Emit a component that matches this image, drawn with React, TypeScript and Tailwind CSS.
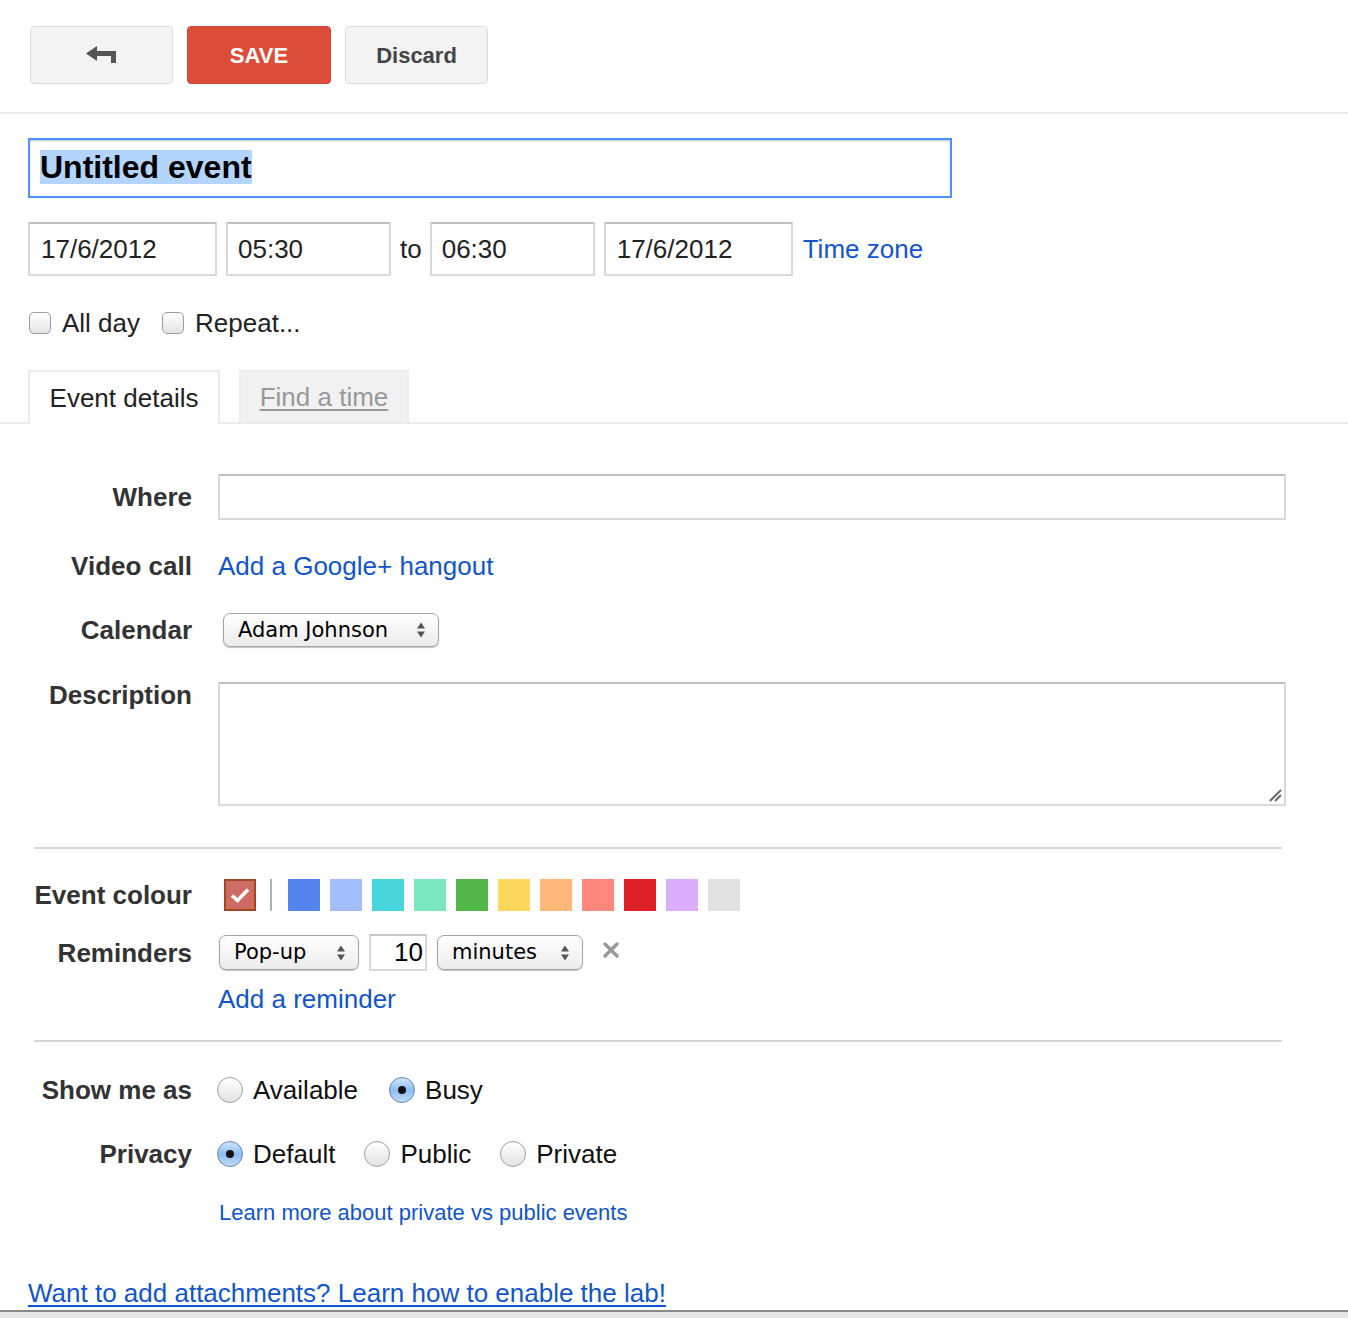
import React from "react";

const font = { fontFamily: '"Liberation Sans", Arial, sans-serif' };

function BackArrow() {
  return (
    <svg width="31" height="18" viewBox="0 0 31 18" className="block">
      <path d="M0 7.5 L11 0 L11 15 Z" fill="#555" />
      <rect x="10" y="5" width="20" height="5" fill="#555" />
      <rect x="25" y="5" width="5" height="12" fill="#555" />
    </svg>
  );
}

function Arrows() {
  return (
    <svg width="10" height="18" viewBox="0 0 10 18" className="block">
      <path d="M1 7.5 L5 1.5 L9 7.5 Z" fill="#555" />
      <path d="M1 10.5 L5 16.5 L9 10.5 Z" fill="#555" />
    </svg>
  );
}

function Select({ label, width, height }: { label: string; width: string; height?: string }) {
  return (
    <div
      className={`${width} ${height ?? "h-[35px]"} flex items-center justify-between pl-[14px] pr-[12px] rounded-[7px] border border-[#a3a3a3] bg-gradient-to-b from-white to-[#ebebeb] shadow-[0_1px_1px_rgba(0,0,0,0.25)]`}
    >
      <span
        className="text-[21px] text-black leading-none"
        style={{ fontFamily: '"DejaVu Sans", "Lucida Grande", sans-serif' }}
      >
        {label}
      </span>
      <Arrows />
    </div>
  );
}

function Checkbox({ label }: { label: string }) {
  return (
    <div className="flex items-center gap-[11px]">
      <div className="w-[22px] h-[22px] rounded-[5px] border border-[#9c9c9c] bg-gradient-to-b from-white to-[#e4e4e4] shadow-[inset_0_1px_1px_rgba(255,255,255,0.9)]" />
      <span className="text-[26px] text-[#222] leading-[30px]">{label}</span>
    </div>
  );
}

function Radio({ label, checked }: { label: string; checked?: boolean }) {
  return (
    <div className="flex items-center gap-[10px]">
      {checked ? (
        <div className="w-[26px] h-[26px] rounded-full border border-[#5f86b8] bg-gradient-to-b from-[#cfe4fb] via-[#8ebcf0] to-[#c2dcf8] flex items-center justify-center">
          <div className="w-[8px] h-[8px] rounded-full bg-[#111]" />
        </div>
      ) : (
        <div className="w-[26px] h-[26px] rounded-full border border-[#a0a0a0] bg-gradient-to-b from-white to-[#e2e2e2]" />
      )}
      <span className="text-[26px] text-[#111] leading-[30px]">{label}</span>
    </div>
  );
}

function Label({ children, className }: { children: React.ReactNode; className?: string }) {
  return (
    <div
      className={`w-[192px] shrink-0 text-right text-[26px] font-bold text-[#333] leading-[30px] ${className ?? ""}`}
    >
      {children}
    </div>
  );
}

const swatches = [
  "#5484ed",
  "#a4bdfc",
  "#46d6db",
  "#7ae7bf",
  "#51b749",
  "#fbd75b",
  "#ffb878",
  "#ff887c",
  "#dc2127",
  "#dbadff",
  "#e1e1e1",
];

export default function App() {
  return (
    <div className="min-h-[1318px] bg-white" style={font}>
      {/* Toolbar */}
      <div className="h-[114px] border-b-2 border-[#ebebeb] pt-[26px] pl-[30px] flex gap-[14px] items-start">
        <div className="w-[143px] h-[58px] rounded-[4px] border border-[#dcdcdc] bg-[#f3f3f3] flex items-center justify-center">
          <BackArrow />
        </div>
        <div className="w-[144px] h-[58px] rounded-[4px] bg-[#dd4b39] border border-[#d14836] flex items-center justify-center text-white font-bold text-[22px]">
          SAVE
        </div>
        <div className="w-[143px] h-[58px] rounded-[4px] border border-[#dcdcdc] bg-[#f3f3f3] flex items-center justify-center text-[#444] font-bold text-[22px]">
          Discard
        </div>
      </div>

      {/* Title + time */}
      <div className="pl-[28px]">
        <div className="mt-[24px] w-[924px] h-[60px] border-2 border-[#4d90fe] shadow-[inset_0_1px_2px_rgba(0,0,0,0.25)] pl-[10px] pt-[10px]">
          <span className="bg-[#b3d4fc] text-black font-bold text-[32px] leading-[34px] inline-block">
            Untitled event
          </span>
        </div>

        <div className="mt-[24px] flex items-center gap-[9px]">
          <div className="w-[189px] h-[54px] border-2 border-[#d9d9d9] border-t-[#c0c0c0] pl-[11px] flex items-center text-[26px] text-[#222]">
            17/6/2012
          </div>
          <div className="w-[165px] h-[54px] border-2 border-[#d9d9d9] border-t-[#c0c0c0] pl-[10px] flex items-center text-[26px] text-[#222]">
            05:30
          </div>
          <span className="text-[26px] text-[#222] -mr-[1px]">to</span>
          <div className="w-[165px] h-[54px] border-2 border-[#d9d9d9] border-t-[#c0c0c0] pl-[10px] flex items-center text-[26px] text-[#222]">
            06:30
          </div>
          <div className="w-[189px] h-[54px] border-2 border-[#d9d9d9] border-t-[#c0c0c0] pl-[11px] flex items-center text-[26px] text-[#222]">
            17/6/2012
          </div>
          <span className="ml-[1px] text-[26px] text-[#15c]">Time zone</span>
        </div>

        <div className="mt-[32px] flex items-center gap-[22px] pl-[1px]">
          <Checkbox label="All day" />
          <Checkbox label="Repeat..." />
        </div>
      </div>

      {/* Tabs */}
      <div className="mt-[32px] border-b-2 border-[#ebebeb] pl-[28px] flex gap-[19px] items-end">
        <div className="w-[192px] h-[54px] -mb-[2px] border-2 border-b-0 border-[#ebebeb] bg-white flex items-center justify-center text-[26px] text-[#222]">
          Event details
        </div>
        <div className="w-[170px] h-[52px] bg-[#f1f1f1] border-2 border-b-0 border-[#ededed] flex items-center justify-center text-[26px] text-[#999] underline decoration-2 underline-offset-[3px]">
          Find a time
        </div>
      </div>

      {/* Form */}
      <div>
        <div className="mt-[50px] flex items-center">
          <Label>Where</Label>
          <div className="ml-[26px] w-[1068px] h-[46px] border-2 border-[#d9d9d9] border-t-[#c0c0c0]" />
        </div>

        <div className="mt-[31px] flex items-center">
          <Label>Video call</Label>
          <span className="ml-[26px] text-[26px] leading-[30px] text-[#15c]">Add a Google+ hangout</span>
        </div>

        <div className="mt-[32px] flex items-center">
          <Label>Calendar</Label>
          <div className="ml-[31px]">
            <Select label="Adam Johnson" width="w-[216px]" height="h-[34px]" />
          </div>
        </div>

        <div className="mt-[35px] flex items-start">
          <Label className="-mt-[2px]">Description</Label>
          <div className="ml-[26px] w-[1068px] h-[124px] border-2 border-[#d9d9d9] border-t-[#c0c0c0] relative">
            <svg width="14" height="14" viewBox="0 0 14 14" className="absolute right-[2px] bottom-[2px]">
              <path d="M2 13 L13 2" stroke="#666" strokeWidth="2" />
              <path d="M7 13 L13 7" stroke="#666" strokeWidth="2" />
            </svg>
          </div>
        </div>

        <div className="mt-[41px] ml-[34px] w-[1248px] h-[2px] bg-[#d6d6d6]" />

        <div className="mt-[30px] flex items-center">
          <Label>Event colour</Label>
          <div className="ml-[32px] flex items-center">
            <div className="w-[32px] h-[32px] border-2 border-[#a0481f] bg-[#d06b64] flex items-center justify-center">
              <svg width="20" height="16" viewBox="0 0 20 16">
                <path d="M2 8.5 L7.5 13.5 L18 2.5" stroke="#fff" strokeWidth="3.5" fill="none" />
              </svg>
            </div>
            <div className="ml-[14px] w-[2px] h-[32px] bg-[#b0b0b0]" />
            <div className="ml-[16px] flex gap-[10px]">
              {swatches.map((c) => (
                <div key={c} className="w-[32px] h-[32px]" style={{ backgroundColor: c }} />
              ))}
            </div>
          </div>
        </div>

        <div className="mt-[23px] flex items-center">
          <Label>Reminders</Label>
          <div className="ml-[27px] flex items-center">
            <Select label="Pop-up" width="w-[140px]" />
            <div className="ml-[10px] w-[58px] h-[37px] border-2 border-[#d9d9d9] border-t-[#c8c8c8] flex items-center justify-end pr-[2px] text-[26px] text-black">
              10
            </div>
            <div className="ml-[10px]">
              <Select label="minutes" width="w-[146px]" />
            </div>
            <svg width="18" height="18" viewBox="0 0 18 18" className="ml-[19px] -mt-[6px]">
              <path d="M3 3 L15 15 M15 3 L3 15" stroke="#9a9a9a" strokeWidth="3.5" strokeLinecap="round" />
            </svg>
          </div>
        </div>

        <div className="mt-[13px] pl-[218px] text-[26px] leading-[30px] text-[#15c]">Add a reminder</div>

        <div className="mt-[26px] ml-[34px] w-[1248px] h-[2px] bg-[#d6d6d6]" />

        <div className="mt-[33px] flex items-center">
          <Label>Show me as</Label>
          <div className="ml-[25px] flex items-center gap-[31px]">
            <Radio label="Available" />
            <Radio label="Busy" checked />
          </div>
        </div>

        <div className="mt-[34px] flex items-center">
          <Label>Privacy</Label>
          <div className="ml-[25px] flex items-center gap-[29px]">
            <Radio label="Default" checked />
            <Radio label="Public" />
            <Radio label="Private" />
          </div>
        </div>

        <div className="mt-[31px] pl-[219px] text-[22px] leading-[26px] text-[#15c]">
          Learn more about private vs public events
        </div>

        <div className="mt-[52px] pl-[28px] text-[26px] leading-[30px] text-[#15c] underline decoration-2 underline-offset-[3px]">
          Want to add attachments? Learn how to enable the lab!
        </div>
      </div>

      <div className="mt-[2px] border-t-2 border-[#8a8a8a] bg-[#e6e6e6] h-[40px]" />
    </div>
  );
}
